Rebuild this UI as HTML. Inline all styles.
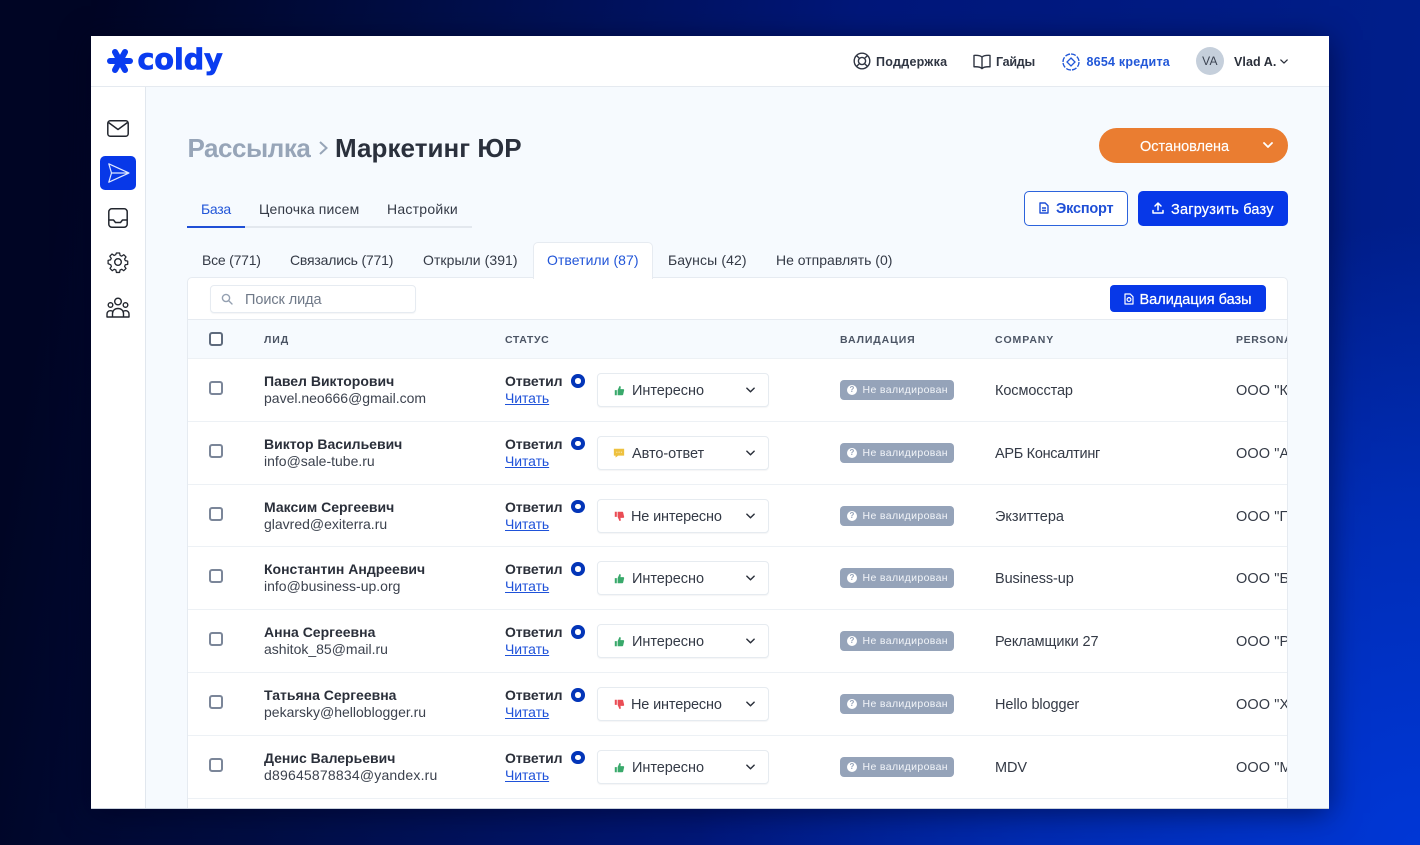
<!DOCTYPE html>
<html lang="ru"><head><meta charset="utf-8"><title>Coldy</title>
<style>
*{box-sizing:border-box}
html,body{margin:0;padding:0;width:1420px;height:845px;overflow:hidden}
body{position:relative;font-family:"Liberation Sans","Noto Sans CJK SC",sans-serif;color:#2a2f3a;
background:radial-gradient(720px 620px at 100% 100%,#0037d6 0%,rgba(0,55,214,.55) 55%,rgba(0,55,214,0) 100%),linear-gradient(100deg,#000524 6%,#000d42 25%,#00177a 55%,#00208f 100%)}
.a,.a *{white-space:nowrap}
.a{position:absolute}
svg{display:block;overflow:visible}
#win{position:absolute;left:91px;top:36px;width:1238px;height:773px;background:#f6fafe;overflow:hidden;box-shadow:0 4px 28px rgba(0,0,30,.55)}
.t{font-size:14px;line-height:18px;color:#343a46}
.b{font-weight:700}
.row{position:absolute;left:0;width:1100px;height:62.8px;border-top:1px solid #edf1f5;background:#fff}
.row>*{position:absolute;white-space:nowrap}
.cb{left:20.7px;top:22px;width:14px;height:14px;border:2px solid #7b8699;border-radius:3px;background:#fff}
.nm{left:76px;top:14px;font-size:14px;font-weight:700;letter-spacing:0;line-height:17px;color:#2a2f3a}
.em{left:76px;top:31px;font-size:14px;letter-spacing:0;line-height:17px;color:#3c424e}
.st{left:317px;top:14px;font-size:14px;font-weight:700;letter-spacing:-.1px;line-height:17px;color:#2a2f3a}
.rd{left:317px;top:31px;font-size:14px;letter-spacing:-.08px;line-height:17px;color:#1f52d9;text-decoration:underline}
.dot{left:383px;top:15px;width:13.5px;height:13.5px;border-radius:50%;border:4px solid #0335b8;background:#fff}
.dd{left:409px;top:14px;width:172px;height:34px;border:1px solid #e6ebf0;border-radius:4px;background:#fff;box-shadow:0 1px 1px rgba(30,50,80,.05)}
.dd svg{position:absolute}
.dd span{position:absolute;top:8px;font-size:14.5px;letter-spacing:-.05px;line-height:18px;color:#343a46}
.bd{left:652px;top:21px;width:114px;height:20px;border-radius:4px;background:#95a3b9;color:#f2f5f9;font-size:10.5px;letter-spacing:.36px;line-height:21px;padding-left:22.5px}
.bd i{position:absolute;left:7px;top:5px;width:10px;height:10px;border-radius:50%;background:#fff;color:#95a3b9;font:700 8px/10px "Liberation Sans",sans-serif;text-align:center;letter-spacing:0}
.co{left:807px;top:23px;font-size:14.5px;letter-spacing:-.1px;line-height:18px;color:#343a46}
.pe{left:1048px;top:23px;font-size:14.5px;letter-spacing:.1px;line-height:18px;color:#343a46}
.th{position:absolute;top:13px;font-size:10.5px;font-weight:700;letter-spacing:.9px;line-height:14px;color:#4b5464;white-space:nowrap}
</style></head><body>
<svg width="0" height="0" style="position:absolute">
<defs>
<symbol id="up" viewBox="0 0 14 14"><path d="M1 6.5h2.6v6.5H1zM4.6 6.5 7 1.2c1.1 0 1.8.8 1.6 1.9L8.2 5.3h3.6c.8 0 1.3.7 1.1 1.4l-1.2 5.3c-.1.6-.6 1-1.2 1H4.6z" fill="#39a96b"/></symbol>
<symbol id="down" viewBox="0 0 14 14"><path d="M1 7.5h2.6V1H1zM4.6 7.5 7 12.8c1.1 0 1.8-.8 1.6-1.9l-.4-2.2h3.6c.8 0 1.3-.7 1.1-1.4L11.7 2c-.1-.6-.6-1-1.2-1H4.6z" fill="#ea4d55"/></symbol>
<symbol id="msg" viewBox="0 0 14 14"><path d="M1 2h12v8H6l-3 2.4V10H1z" fill="#eec13f"/><path d="M4 6h1M6.6 6h1M9.2 6h1" stroke="#fff" stroke-width="1"/></symbol>
<symbol id="chev" viewBox="0 0 10 6"><path d="M1 1l4 4 4-4" fill="none" stroke="#2a2f3a" stroke-width="1.6" stroke-linecap="round" stroke-linejoin="round"/></symbol>
</defs>
</svg>

<div id="win">
<!-- top bar -->
<div class="a" style="left:0;top:0;width:1238px;height:51px;background:#fff;border-bottom:1px solid #e5eaf0"></div>
<svg class="a" style="left:15px;top:11px" width="28" height="28" viewBox="0 0 28 28"><g stroke="#0a3cf0" stroke-width="6" stroke-linecap="round"><path d="M14 14 4 14"/><path d="M14 14 24 14"/><path d="M14 14 9 5"/><path d="M14 14 19 5"/><path d="M14 14 9 23"/><path d="M14 14 19 23"/></g></svg>
<div class="a" style="left:46.5px;top:7px;font:700 28.5px/34px 'DejaVu Sans',sans-serif;letter-spacing:0;color:#0a3cf0;-webkit-text-stroke:.8px #0a3cf0">coldy</div>

<svg class="a" style="left:762px;top:16px" width="18" height="18" viewBox="0 0 18 18" fill="none" stroke="#2f3542" stroke-width="1.4"><circle cx="9" cy="9" r="7.8"/><circle cx="9" cy="9" r="3.6"/><path d="M3.6 3.6 6.4 6.4M14.4 3.6 11.6 6.4M3.6 14.4 6.4 11.6M14.4 14.4 11.6 11.6"/></svg>
<div class="a b" style="left:785px;top:17px;font-size:12.5px;letter-spacing:.28px;line-height:18px;color:#2f3542">Поддержка</div>
<svg class="a" style="left:882px;top:17.5px" width="18" height="16" viewBox="0 0 18 16" fill="none" stroke="#2f3542" stroke-width="1.4" stroke-linejoin="round"><path d="M9 3.2C7.6 1.7 4.5 1.2 1 1.4v11.4c3.5-.2 6.6.3 8 1.8 1.4-1.5 4.5-2 8-1.8V1.4C13.500 1.2 10.4 1.7 9 3.2zM9 3.2v11.4"/></svg>
<div class="a b" style="left:905px;top:17px;font-size:12.5px;letter-spacing:-.25px;line-height:18px;color:#2f3542">Гайды</div>
<svg class="a" style="left:971px;top:16.5px" width="18" height="18" viewBox="0 0 18 18" fill="none" stroke="#2157d8" stroke-width="1.3"><path d="M1 9a8 8 0 0 1 8-8" stroke-dasharray="5 1.5"/><path d="M9 1a8 8 0 0 1 8 8M17 9a8 8 0 0 1-8 8M9 17a8 8 0 0 1-8-8" stroke-dasharray="5 1.5"/><path d="M9 5 13 9 9 13 5 9z"/></svg>
<div class="a b" style="left:995.5px;top:17px;font-size:12.5px;letter-spacing:.22px;line-height:18px;color:#2157d8">8654 кредита</div>
<div class="a" style="left:1105px;top:11px;width:28px;height:28px;border-radius:50%;background:#c5cfdb;color:#3a4250;font-size:12px;line-height:29px;text-align:center;letter-spacing:.3px">VA</div>
<div class="a b" style="left:1143px;top:17px;font-size:12.5px;letter-spacing:.07px;line-height:18px;color:#2a2f3a">Vlad A.</div>
<svg class="a" style="left:1189px;top:23px" width="8" height="5" viewBox="0 0 10 6"><use href="#chev"/></svg>

<!-- sidebar -->
<div class="a" style="left:0;top:51px;width:55px;height:722px;background:#fff;border-right:1px solid #e1e7ee"></div>
<svg class="a" style="left:16px;top:84px" width="22" height="17" viewBox="0 0 22 17" fill="none" stroke="#22262e" stroke-width="1.5" stroke-linejoin="round"><rect x=".8" y=".8" width="20.4" height="15.4" rx="2.5"/><path d="M1.5 2.5 11 9.5l9.5-7"/></svg>
<div class="a" style="left:9px;top:120px;width:36px;height:34px;border-radius:5px;background:#0738e8"></div>
<svg class="a" style="left:17px;top:127px" width="22" height="20" viewBox="0 0 22 20" fill="none" stroke="#dfe8ff" stroke-width="1.2" stroke-linejoin="round"><path d="M.8.8 21 10 .8 19.2 3.5 10zM3.5 10H21"/></svg>
<svg class="a" style="left:17px;top:172px" width="20" height="20" viewBox="0 0 20 20" fill="none" stroke="#22262e" stroke-width="1.5" stroke-linejoin="round"><rect x=".8" y=".8" width="18.4" height="18.4" rx="3"/><path d="M1 12h4.5l2 2.500h5l2-2.500H19"/></svg>
<svg class="a" style="left:16px;top:215px" width="22" height="22" viewBox="0 0 22 22" fill="none" stroke="#22262e" stroke-width="1.4" stroke-linejoin="round"><path d="M9.2 1h3.6l.5 2.7 1.8.8 2.3-1.6 2.5 2.5-1.6 2.3.8 1.8 2.7.5v3.6l-2.7.5-.8 1.8 1.6 2.3-2.5 2.5-2.3-1.6-1.8.8-.5 2.700H9.2l-.5-2.7-1.8-.8-2.300 1.600-2.500-2.500 1.600-2.300-.8-1.800L0 12.800V9.200l2.700-.5.8-1.800-1.600-2.300 2.500-2.500 2.300 1.600 1.800-.8z" transform="translate(1.1 1.1) scale(.9)"/><circle cx="11" cy="11" r="3.3"/></svg>
<svg class="a" style="left:15px;top:261px" width="24" height="21" viewBox="0 0 24 21" fill="none" stroke="#22262e" stroke-width="1.4" stroke-linejoin="round"><circle cx="12" cy="4.5" r="3.3"/><circle cx="4.5" cy="8" r="2.3"/><circle cx="19.5" cy="8" r="2.3"/><path d="M6.5 20v-3.500c0-3 2.400-5 5.500-5s5.500 2 5.500 5V20zM6.500 20H1v-3c0-2 1.400-3.300 3.500-3.300 1 0 1.700.3 2.400.8M17.500 20H23v-3c0-2-1.400-3.300-3.500-3.300-1 0-1.700.3-2.400.8"/></svg>

<!-- title -->
<div class="a b" style="left:96.5px;top:95px;font-size:26px;letter-spacing:-.46px;line-height:34px;color:#97a5b8">Рассылка</div>
<svg class="a" style="left:228px;top:105px" width="9" height="14" viewBox="0 0 9 14" fill="none" stroke="#97a5b8" stroke-width="2"><path d="M1 1l6.500 6L1 13"/></svg>
<div class="a b" style="left:244px;top:95px;font-size:26px;letter-spacing:.05px;line-height:34px;color:#2a303c">Маркетинг ЮР</div>

<!-- status -->
<div class="a" style="left:1008px;top:92px;width:189px;height:35px;border-radius:18px;background:#ea7d31"></div>
<div class="a" style="left:1049px;top:102px;font-size:14.5px;letter-spacing:0;line-height:18px;color:#fff;-webkit-text-stroke:.15px #fff">Остановлена</div>
<svg class="a" style="left:1172px;top:106px" width="10" height="6" viewBox="0 0 10 6" fill="none" stroke="#fff" stroke-width="1.8" stroke-linecap="round" stroke-linejoin="round"><path d="M1 1l4 4 4-4"/></svg>

<!-- tabs -->
<div class="a" style="left:96px;top:189.5px;width:285px;height:2px;background:#e3e8ee"></div>
<div class="a" style="left:96px;top:189.5px;width:58px;height:2px;background:#1f4fd6"></div>
<div class="a t" style="left:110px;top:164px;color:#2256d8;letter-spacing:-.3px">База</div>
<div class="a t" style="left:168px;top:164px;letter-spacing:.15px">Цепочка писем</div>
<div class="a t" style="left:296px;top:164px;letter-spacing:.25px">Настройки</div>

<div class="a" style="left:933px;top:155px;width:104px;height:35px;border:1px solid #2c63dc;border-radius:5px;background:#fff"></div>
<svg class="a" style="left:948px;top:166px" width="10" height="12" viewBox="0 0 10 12" fill="none" stroke="#1f4fd6" stroke-width="1.4" stroke-linejoin="round"><path d="M1 1h5.200L9 3.800V11H1zM3 6h4M3 8.500h4"/></svg>
<div class="a b" style="left:965px;top:164px;font-size:14.5px;letter-spacing:-.2px;line-height:19px;color:#1f4fd6">Экспорт</div>
<div class="a" style="left:1047px;top:155px;width:150px;height:35px;border-radius:5px;background:#0738e8"></div>
<svg class="a" style="left:1061px;top:166px" width="12" height="12" viewBox="0 0 12 12" fill="none" stroke="#fff" stroke-width="1.5" stroke-linecap="round" stroke-linejoin="round"><path d="M6 8V1.500M3 4l3-3 3 3M1 8.500V11h10V8.500"/></svg>
<div class="a" style="left:1080px;top:165px;font-size:14.5px;letter-spacing:.2px;line-height:18px;color:#fff;font-weight:400;-webkit-text-stroke:.25px #fff">Загрузить базу</div>

<!-- filter tabs -->
<div class="a" style="left:442px;top:206px;width:120px;height:37px;background:#fff;border:1px solid #e6ebf1;border-bottom:0;border-radius:5px 5px 0 0;z-index:3"></div>
<div class="a t" style="left:111px;top:215px;letter-spacing:-.22px">Все (771)</div>
<div class="a t" style="left:199px;top:215px;letter-spacing:-.19px">Связались (771)</div>
<div class="a t" style="left:332px;top:215px;letter-spacing:.06px">Открыли (391)</div>
<div class="a t" style="left:456px;top:215px;color:#2256d8;z-index:4;letter-spacing:.05px">Ответили (87)</div>
<div class="a t" style="left:577px;top:215px;letter-spacing:.12px">Баунсы (42)</div>
<div class="a t" style="left:685px;top:215px">Не отправлять (0)</div>

<!-- panel -->
<div class="a" id="panel" style="left:96px;top:241px;width:1101px;height:540px;background:#fff;border:1px solid #e6ebf1;border-radius:5px 5px 0 0;overflow:hidden">
 <div class="a" style="left:21.5px;top:7px;width:206px;height:28px;border:1px solid #e6ebf1;border-radius:4px;background:#fff;box-shadow:0 1px 1px rgba(30,50,80,.05)"></div>
 <svg class="a" style="left:33px;top:15px" width="12" height="12" viewBox="0 0 12 12" fill="none" stroke="#94a0b1" stroke-width="1.4"><circle cx="5" cy="5" r="3.6"/><path d="M8 8l3 3" stroke-linecap="round"/></svg>
 <div class="a" style="left:57px;top:13px;font-size:14.5px;letter-spacing:-.08px;line-height:18px;color:#6f7988">Поиск лида</div>
 <div class="a" style="left:922px;top:7px;width:156px;height:27px;border-radius:4px;background:#0738e8"></div>
 <svg class="a" style="left:936px;top:15px" width="10" height="12" viewBox="0 0 10 12" fill="none" stroke="#fff" stroke-width="1.2" stroke-linejoin="round"><path d="M1 1h5.200L9 3.800V11H1z"/><circle cx="5" cy="6.500" r="1.900"/></svg>
 <div class="a" style="left:951.5px;top:13px;font-size:14.5px;letter-spacing:0;line-height:18px;color:#fff;-webkit-text-stroke:.25px #fff">Валидация базы</div>

 <div class="a" style="left:0;top:41px;width:1100px;height:39px;background:#f6fafe;border-top:1px solid #e6ebf1">
  <div class="a" style="left:20.7px;top:12px;width:14px;height:14px;border:2px solid #5f6b7d;border-radius:3px;background:#fff"></div>
  <div class="th" style="left:76px">ЛИД</div>
  <div class="th" style="left:317px;letter-spacing:.6px">СТАТУС</div>
  <div class="th" style="left:652px">ВАЛИДАЦИЯ</div>
  <div class="th" style="left:807px">COMPANY</div>
  <div class="th" style="left:1048px;letter-spacing:.6px">PERSONAL</div>
 </div>

 <div class="row" style="top:80px"><div class="cb"></div><div class="nm">Павел Викторович</div><div class="em">pavel.neo666@gmail.com</div><div class="st">Ответил</div><div class="rd">Читать</div><div class="dot"></div><div class="dd"><svg style="left:16px;top:11px" width="11" height="11"><use href="#up"/></svg><span style="left:34px">Интересно</span><svg style="left:148px;top:13px" width="9" height="6"><use href="#chev"/></svg></div><div class="bd"><i>?</i>Не валидирован</div><div class="co">Космосстар</div><div class="pe">ООО "Космосстар"</div></div>

 <div class="row" style="top:142.8px"><div class="cb"></div><div class="nm">Виктор Васильевич</div><div class="em">info@sale-tube.ru</div><div class="st">Ответил</div><div class="rd">Читать</div><div class="dot"></div><div class="dd"><svg style="left:15px;top:10px" width="12" height="12"><use href="#msg"/></svg><span style="left:34px">Авто-ответ</span><svg style="left:148px;top:13px" width="9" height="6"><use href="#chev"/></svg></div><div class="bd"><i>?</i>Не валидирован</div><div class="co" style="letter-spacing:-.3px">АРБ Консалтинг</div><div class="pe">ООО "АРБ"</div></div>

 <div class="row" style="top:205.6px"><div class="cb"></div><div class="nm">Максим Сергеевич</div><div class="em">glavred@exiterra.ru</div><div class="st">Ответил</div><div class="rd">Читать</div><div class="dot"></div><div class="dd"><svg style="left:16px;top:11px" width="11" height="11"><use href="#down"/></svg><span style="left:33px;letter-spacing:-.16px">Не интересно</span><svg style="left:148px;top:13px" width="9" height="6"><use href="#chev"/></svg></div><div class="bd"><i>?</i>Не валидирован</div><div class="co" style="letter-spacing:0">Экзиттера</div><div class="pe">ООО "Полет"</div></div>

 <div class="row" style="top:268.4px"><div class="cb"></div><div class="nm">Константин Андреевич</div><div class="em">info@business-up.org</div><div class="st">Ответил</div><div class="rd">Читать</div><div class="dot"></div><div class="dd"><svg style="left:16px;top:11px" width="11" height="11"><use href="#up"/></svg><span style="left:34px">Интересно</span><svg style="left:148px;top:13px" width="9" height="6"><use href="#chev"/></svg></div><div class="bd"><i>?</i>Не валидирован</div><div class="co">Business-up</div><div class="pe">ООО "Бизнес"</div></div>

 <div class="row" style="top:331.2px"><div class="cb"></div><div class="nm">Анна Сергеевна</div><div class="em">ashitok_85@mail.ru</div><div class="st">Ответил</div><div class="rd">Читать</div><div class="dot"></div><div class="dd"><svg style="left:16px;top:11px" width="11" height="11"><use href="#up"/></svg><span style="left:34px">Интересно</span><svg style="left:148px;top:13px" width="9" height="6"><use href="#chev"/></svg></div><div class="bd"><i>?</i>Не валидирован</div><div class="co">Рекламщики 27</div><div class="pe">ООО "Реклама"</div></div>

 <div class="row" style="top:394px"><div class="cb"></div><div class="nm">Татьяна Сергеевна</div><div class="em">pekarsky@helloblogger.ru</div><div class="st">Ответил</div><div class="rd">Читать</div><div class="dot"></div><div class="dd"><svg style="left:16px;top:11px" width="11" height="11"><use href="#down"/></svg><span style="left:33px;letter-spacing:-.16px">Не интересно</span><svg style="left:148px;top:13px" width="9" height="6"><use href="#chev"/></svg></div><div class="bd"><i>?</i>Не валидирован</div><div class="co">Hello blogger</div><div class="pe">ООО "Хелло"</div></div>

 <div class="row" style="top:456.8px"><div class="cb"></div><div class="nm">Денис Валерьевич</div><div class="em" style="letter-spacing:.2px">d89645878834@yandex.ru</div><div class="st">Ответил</div><div class="rd">Читать</div><div class="dot"></div><div class="dd"><svg style="left:16px;top:11px" width="11" height="11"><use href="#up"/></svg><span style="left:34px">Интересно</span><svg style="left:148px;top:13px" width="9" height="6"><use href="#chev"/></svg></div><div class="bd"><i>?</i>Не валидирован</div><div class="co">MDV</div><div class="pe">ООО "МДВ"</div></div>

 <div class="row" style="top:519.6px"></div>
</div>
<div class="a" style="left:0;bottom:0;width:1238px;height:1px;background:#c9d1dc;z-index:9"></div>
</div>
</body></html>
